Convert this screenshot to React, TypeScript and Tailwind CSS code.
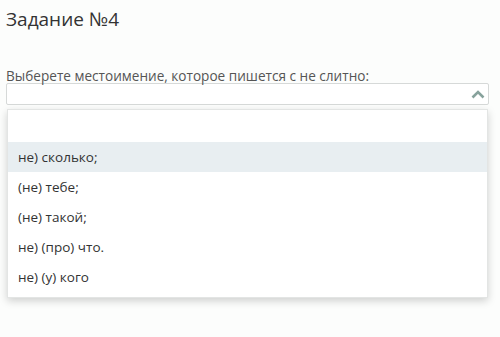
import React from "react";

const options = ["не) сколько;", "(не) тебе;", "(не) такой;", "не) (про) что.", "не) (у) кого"];

export default function App() {
  return (
    <div className="w-[500px] h-[337px] bg-[#fcfdfc] overflow-hidden text-[#333]" style={{ fontFamily: '"Open Sans", sans-serif' }}>
      <div className="pl-[6px] pr-[11px]">
        <h1 className="pt-[6px] text-[19px] leading-[26px] text-[#333] font-normal">Задание №4</h1>
        <div className="mt-[35px] text-[13.6px] leading-[17px] text-[#555]">Выберете местоимение, которое пишется с не слитно:</div>
        <div className="mt-[-1px] h-[22px] border border-[#d6d9d8] rounded-[2px] bg-white flex items-center justify-end pr-[3px]">
          <svg width="14" height="9" viewBox="0 0 14 9">
            <path d="M1.5 7.5 L7 2 L12.5 7.5" fill="none" stroke="#87a29c" strokeWidth="2.6" />
          </svg>
        </div>
        <div className="mt-[4px] ml-[1px] mr-[1px] bg-white border border-[#e3e5e4] shadow-[0_3px_8px_rgba(0,0,0,0.18)] pt-[2px] pb-[5px]">
          <div className="h-[30px]" />
          {options.map((o, i) => (
            <div
              key={o}
              className={`h-[30px] flex items-center pl-[10px] text-[13.5px] text-[#333] ${i === 0 ? "bg-[#e8eef1]" : ""}`}
            >
              {o}
            </div>
          ))}
        </div>
      </div>
    </div>
  );
}
